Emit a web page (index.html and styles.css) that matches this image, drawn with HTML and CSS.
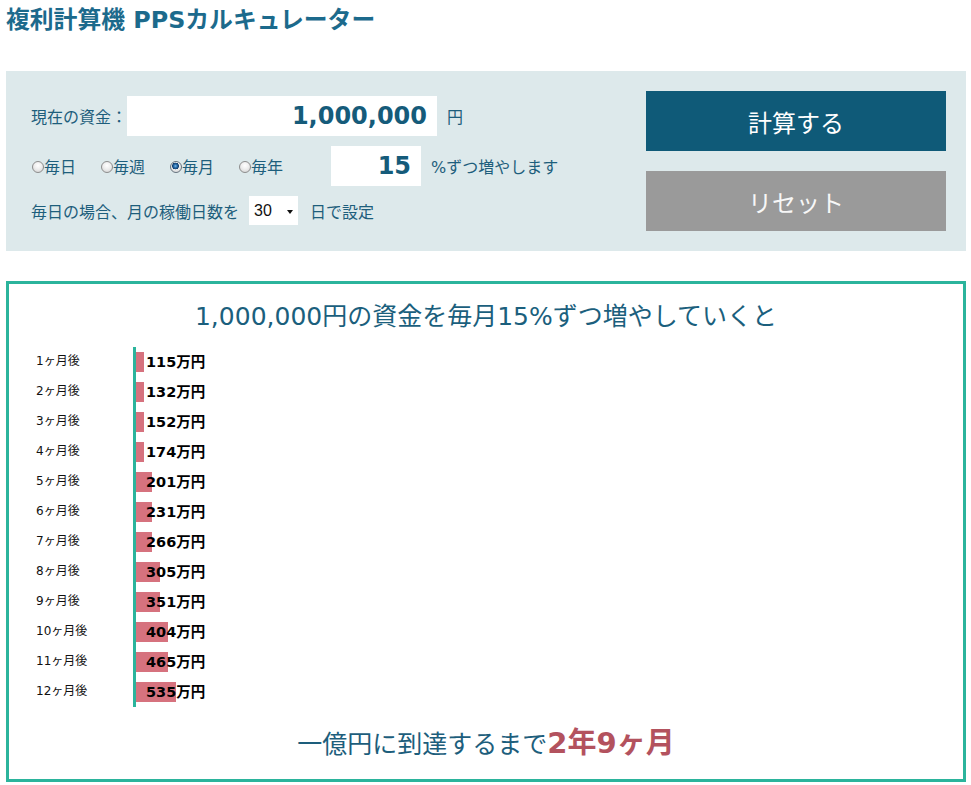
FILE: index.html
```html
<!DOCTYPE html>
<html lang="ja">
<head>
<meta charset="utf-8">
<title>複利計算機 PPSカルキュレーター</title>
<link rel="stylesheet" href="styles.css">
</head>
<body>
<div class="page">
  <h1 class="title">複利計算機 PPSカルキュレーター</h1>

  <div class="panel">
    <div class="form">
      <div class="row row-capital">
        <span class="lbl">現在の資金：</span>
        <input class="num num-capital" type="text" value="1,000,000">
        <span class="unit">円</span>
      </div>
      <div class="row row-rate">
        <label class="radio-item"><input class="radio" type="radio" name="period"><span>毎日</span></label>
        <label class="radio-item"><input class="radio" type="radio" name="period"><span>毎週</span></label>
        <label class="radio-item"><input class="radio" type="radio" name="period" checked><span>毎月</span></label>
        <label class="radio-item last"><input class="radio" type="radio" name="period"><span>毎年</span></label>
        <input class="num num-rate" type="text" value="15">
        <span class="unit">%ずつ増やします</span>
      </div>
      <div class="row row-days">
        <span>毎日の場合、月の稼働日数を</span>
        <div class="select"><span class="select-val">30</span><span class="caret"></span></div>
        <span class="after-select">日で設定</span>
      </div>
    </div>
    <div class="buttons">
      <button class="btn btn-calc" type="button">計算する</button>
      <button class="btn btn-reset" type="button">リセット</button>
    </div>
  </div>

  <div class="result">
    <h2 class="result-title">1,000,000円の資金を毎月15%ずつ増やしていくと</h2>
    <div class="chart">
      <div class="c-label">1ヶ月後</div><div class="c-cell"><div class="track"><div class="bar" style="width:1%"></div><span class="val">115万円</span></div></div>
      <div class="c-label">2ヶ月後</div><div class="c-cell"><div class="track"><div class="bar" style="width:1%"></div><span class="val">132万円</span></div></div>
      <div class="c-label">3ヶ月後</div><div class="c-cell"><div class="track"><div class="bar" style="width:1%"></div><span class="val">152万円</span></div></div>
      <div class="c-label">4ヶ月後</div><div class="c-cell"><div class="track"><div class="bar" style="width:1%"></div><span class="val">174万円</span></div></div>
      <div class="c-label">5ヶ月後</div><div class="c-cell"><div class="track"><div class="bar" style="width:2%"></div><span class="val">201万円</span></div></div>
      <div class="c-label">6ヶ月後</div><div class="c-cell"><div class="track"><div class="bar" style="width:2%"></div><span class="val">231万円</span></div></div>
      <div class="c-label">7ヶ月後</div><div class="c-cell"><div class="track"><div class="bar" style="width:2%"></div><span class="val">266万円</span></div></div>
      <div class="c-label">8ヶ月後</div><div class="c-cell"><div class="track"><div class="bar" style="width:3%"></div><span class="val">305万円</span></div></div>
      <div class="c-label">9ヶ月後</div><div class="c-cell"><div class="track"><div class="bar" style="width:3%"></div><span class="val">351万円</span></div></div>
      <div class="c-label">10ヶ月後</div><div class="c-cell"><div class="track"><div class="bar" style="width:4%"></div><span class="val">404万円</span></div></div>
      <div class="c-label">11ヶ月後</div><div class="c-cell"><div class="track"><div class="bar" style="width:4%"></div><span class="val">465万円</span></div></div>
      <div class="c-label">12ヶ月後</div><div class="c-cell"><div class="track"><div class="bar" style="width:5%"></div><span class="val">535万円</span></div></div>
    </div>
    <p class="result-foot">一億円に到達するまで<strong class="reach">2年9ヶ月</strong></p>
  </div>
</div>
</body>
</html>
```

FILE: styles.css
```css
html, body {
  margin: 0;
  padding: 0;
  background: #ffffff;
}

body {
  font-family: "DejaVu Sans", "Noto Sans CJK JP", sans-serif;
  color: #1d5e7c;
}

.page {
  width: 960px;
  margin-left: 6px;
}

.title {
  margin: 0 0 35px 0;
  padding-top: 4px;
  font-size: 23.8px;
  line-height: 32px;
  font-weight: bold;
  color: #1c6a8c;
}

/* ---------- input panel ---------- */
.panel {
  box-sizing: border-box;
  height: 180px;
  background: #dde9eb;
  padding: 20px 20px 20px 25px;
  display: flex;
  justify-content: space-between;
}

.form {
  margin-top: 5px;
  display: flex;
  flex-direction: column;
  gap: 10px;
}

.row {
  display: flex;
  align-items: center;
  font-size: 16px;
  color: #1d5e7c;
}

.row-capital,
.row-rate {
  height: 40px;
}

.row-days {
  height: 29px;
}

.num {
  box-sizing: border-box;
  height: 40px;
  border: 0;
  margin: 0;
  padding: 0 10px;
  background: #ffffff;
  text-align: right;
  font-family: "DejaVu Sans", sans-serif;
  font-weight: bold;
  font-size: 24px;
  color: #155b7a;
  outline: none;
}

.num-capital {
  width: 310px;
}

.num-rate {
  width: 90px;
  margin-left: 48px;
}

.unit {
  margin-left: 10px;
}

.radio-item {
  display: flex;
  align-items: center;
  margin-right: 24px;
}

.radio-item.last {
  margin-right: 0;
}

.radio {
  -webkit-appearance: none;
  appearance: none;
  box-sizing: border-box;
  width: 12px;
  height: 12px;
  margin: 2px 0 0 1px;
  border: 1px solid #8d8d8d;
  border-radius: 50%;
  background: radial-gradient(circle at 50% 35%, #ffffff 0, #eeeeee 45%, #cfcfcf 100%);
}

.radio:checked {
  border-color: #66737e;
  background:
    radial-gradient(circle at 45% 40%, #7fc0ee 0, #2b6fae 1.6px, #123f6e 3.2px, transparent 3.6px),
    radial-gradient(circle at 50% 35%, #ffffff 0, #eeeeee 45%, #cfcfcf 100%);
}

.select {
  box-sizing: border-box;
  width: 49px;
  height: 29px;
  margin-left: 10px;
  padding-left: 5px;
  background: #ffffff;
  display: flex;
  align-items: center;
  font-family: "Liberation Sans", sans-serif;
  font-size: 16px;
  color: #111111;
}

.select-val {
  width: 33px;
}

.caret {
  width: 0;
  height: 0;
  border-left: 3.5px solid transparent;
  border-right: 3.5px solid transparent;
  border-top: 4px solid #111111;
  margin-top: 3px;
}

.after-select {
  margin-left: 12px;
}

.buttons {
  display: flex;
  flex-direction: column;
  gap: 20px;
}

.btn {
  width: 300px;
  height: 60px;
  border: 0;
  margin: 0;
  padding: 0;
  font-family: "Noto Sans CJK JP", sans-serif;
  font-size: 24px;
  color: #ffffff;
  cursor: pointer;
}

.btn-calc {
  background: #0f5a78;
}

.btn-reset {
  background: #9a9a9a;
  color: #f7f7f7;
}

/* ---------- result ---------- */
.result {
  box-sizing: border-box;
  margin-top: 30px;
  width: 960px;
  border: 3px solid #2bb49c;
  padding: 15px 0 14px 0;
}

.result-title {
  margin: 0;
  text-align: center;
  font-size: 25px;
  line-height: 36px;
  font-weight: normal;
  color: #1b5f7d;
}

.chart {
  margin-top: 12px;
  display: grid;
  grid-template-columns: 124px 1fr;
  grid-auto-rows: 30px;
}

.c-label {
  padding-left: 27px;
  font-size: 12px;
  line-height: 29px;
  color: #111111;
}

.c-cell {
  border-left: 3px solid #2bb49c;
}

.track {
  position: relative;
  width: 800px;
  height: 20px;
  margin-top: 5px;
}

.bar {
  height: 20px;
  background: #d6727e;
}

.val {
  position: absolute;
  left: 10px;
  top: 0;
  line-height: 21px;
  font-size: 14.5px;
  font-weight: bold;
  color: #000000;
}

.result-foot {
  margin: 16px 0 0 0;
  text-align: center;
  font-size: 25px;
  line-height: 40px;
  color: #1d5e7c;
}

.reach {
  font-size: 29px;
  font-weight: bold;
  color: #b3525e;
}
```
